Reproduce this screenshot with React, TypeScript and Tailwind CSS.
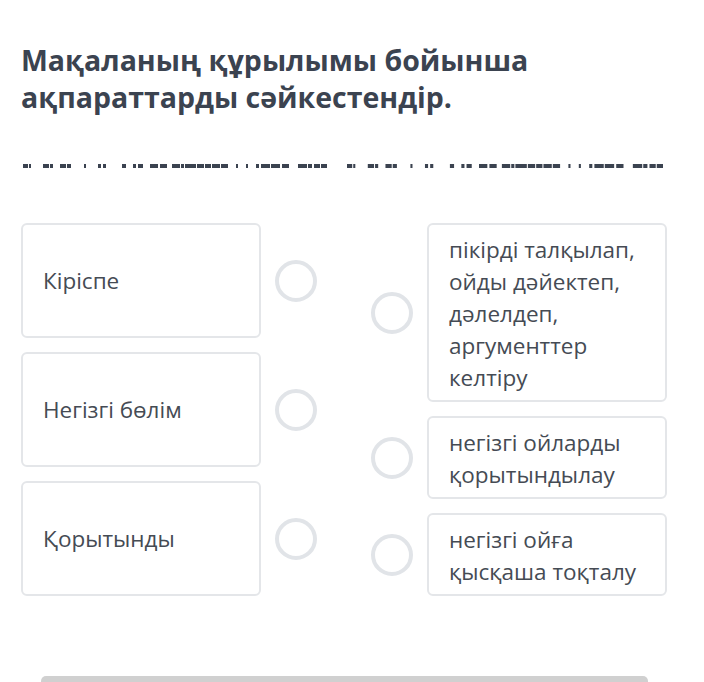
import React from "react";

const segs: [number, number][] = [
  [23, 5], [29, 2], [43, 6], [50, 3], [60, 6], [67, 4], [84, 2], [98, 3], [103, 3],
  [122, 4], [133, 3], [138, 5], [150, 8], [160, 7], [172, 8], [181, 3], [185, 11],
  [197, 7], [205, 6], [212, 8], [221, 7], [236, 2], [246, 2], [256, 3], [261, 9],
  [271, 9], [282, 7], [298, 9], [308, 4], [314, 6], [321, 6],
];

function Dashes() {
  const scale = 316 / 304;
  return (
    <svg width="704" height="6" className="block">
      {segs.map(([x, w], i) => (
        <rect key={"l" + i} x={x} y={1} width={w} height={4} fill="#3b4350" />
      ))}
      {segs.map(([x, w], i) => (
        <rect
          key={"r" + i}
          x={347 + (x - 23) * scale}
          y={1}
          width={w * scale}
          height={4}
          fill="#3b4350"
        />
      ))}
    </svg>
  );
}

function Radio() {
  return (
    <div className="w-[42px] h-[42px] shrink-0 rounded-full border-[4px] border-[#e1e4e8] bg-white" />
  );
}

const leftItems = ["Кіріспе", "Негізгі бөлім", "Қорытынды"];
const rightItems = [
  ["пікірді талқылап,", "ойды дәйектеп,", "дәлелдеп,", "аргументтер", "келтіру"],
  ["негізгі ойларды", "қорытындылау"],
  ["негізгі ойға", "қысқаша тоқталу"],
];

export default function App() {
  return (
    <div
      className="relative w-[704px] h-[682px] overflow-hidden bg-white"
      style={{ fontFamily: '"Open Sans", "Noto Sans", sans-serif' }}
    >
      <div className="pt-[42px] pl-[21px]">
        <h1 className="text-[28.5px] font-bold leading-[37px] text-[#3b4350]">
          Мақаланың құрылымы бойынша
          <br />
          ақпараттарды сәйкестендір.
        </h1>
      </div>
      <div className="mt-[47px]">
        <Dashes />
      </div>
      <div className="mt-[54px] flex pl-[21px]">
        <div className="flex flex-col gap-[14px]">
          {leftItems.map((t) => (
            <div key={t} className="flex items-center">
              <div className="w-[240px] h-[115px] rounded-[6px] border-2 border-[#e4e6e9] flex items-center px-[20px] text-[22.5px] leading-[32px] text-[#454b54]">
                {t}
              </div>
              <div className="ml-[14px]">
                <Radio />
              </div>
            </div>
          ))}
        </div>
        <div className="ml-[54px] flex flex-col gap-[14px]">
          {rightItems.map((lines, i) => (
            <div key={i} className="flex items-center">
              <Radio />
              <div className="ml-[14px] w-[240px] rounded-[6px] border-2 border-[#e4e6e9] pt-[9px] pb-[6px] px-[20px] text-[22.5px] leading-[32px] text-[#454b54]">
                {lines.map((l, j) => (
                  <div key={j}>{l}</div>
                ))}
              </div>
            </div>
          ))}
        </div>
      </div>
      <div className="absolute left-[41px] top-[676px] w-[607px] h-[10px] rounded-[6px] bg-[#d0d0d0]" />
    </div>
  );
}
